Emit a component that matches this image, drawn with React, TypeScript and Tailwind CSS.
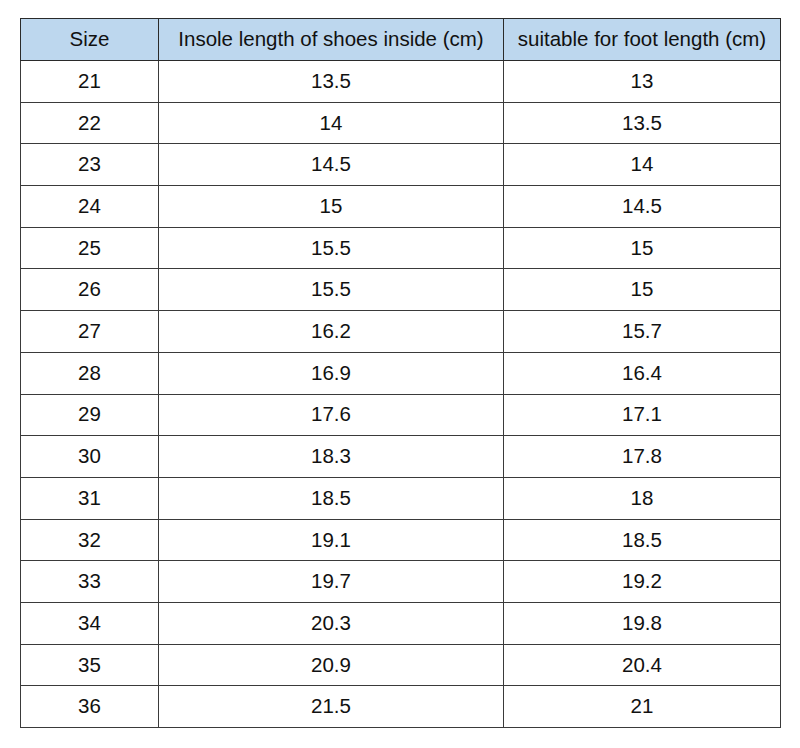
import React from "react";

const rows: [string, string, string][] = [
  ["21", "13.5", "13"],
  ["22", "14", "13.5"],
  ["23", "14.5", "14"],
  ["24", "15", "14.5"],
  ["25", "15.5", "15"],
  ["26", "15.5", "15"],
  ["27", "16.2", "15.7"],
  ["28", "16.9", "16.4"],
  ["29", "17.6", "17.1"],
  ["30", "18.3", "17.8"],
  ["31", "18.5", "18"],
  ["32", "19.1", "18.5"],
  ["33", "19.7", "19.2"],
  ["34", "20.3", "19.8"],
  ["35", "20.9", "20.4"],
  ["36", "21.5", "21"],
];

export default function App() {
  return (
    <div
      className="w-[800px] h-[748px] bg-white pt-[18px] pl-[20px]"
      style={{ fontFamily: '"Liberation Sans", Arial, sans-serif' }}
    >
      <table className="table-fixed border-collapse w-[760px] text-[20.5px] text-[#111]">
        <colgroup>
          <col className="w-[138px]" />
          <col className="w-[345px]" />
          <col className="w-[277px]" />
        </colgroup>
        <thead>
          <tr className="h-[42px] bg-[#bdd7ee]">
            <th className="border-[1.5px] border-[#2a2a2a] font-normal text-center">Size</th>
            <th className="border-[1.5px] border-[#2a2a2a] font-normal text-center">
              Insole length of shoes inside (cm)
            </th>
            <th className="border-[1.5px] border-[#2a2a2a] font-normal text-center">
              suitable for foot length (cm)
            </th>
          </tr>
        </thead>
        <tbody>
          {rows.map((r) => (
            <tr key={r[0]} className="h-[41.7px]">
              <td className="border-[1.5px] border-[#3a3a3a] text-center">{r[0]}</td>
              <td className="border-[1.5px] border-[#3a3a3a] text-center">{r[1]}</td>
              <td className="border-[1.5px] border-[#3a3a3a] text-center">{r[2]}</td>
            </tr>
          ))}
        </tbody>
      </table>
    </div>
  );
}
